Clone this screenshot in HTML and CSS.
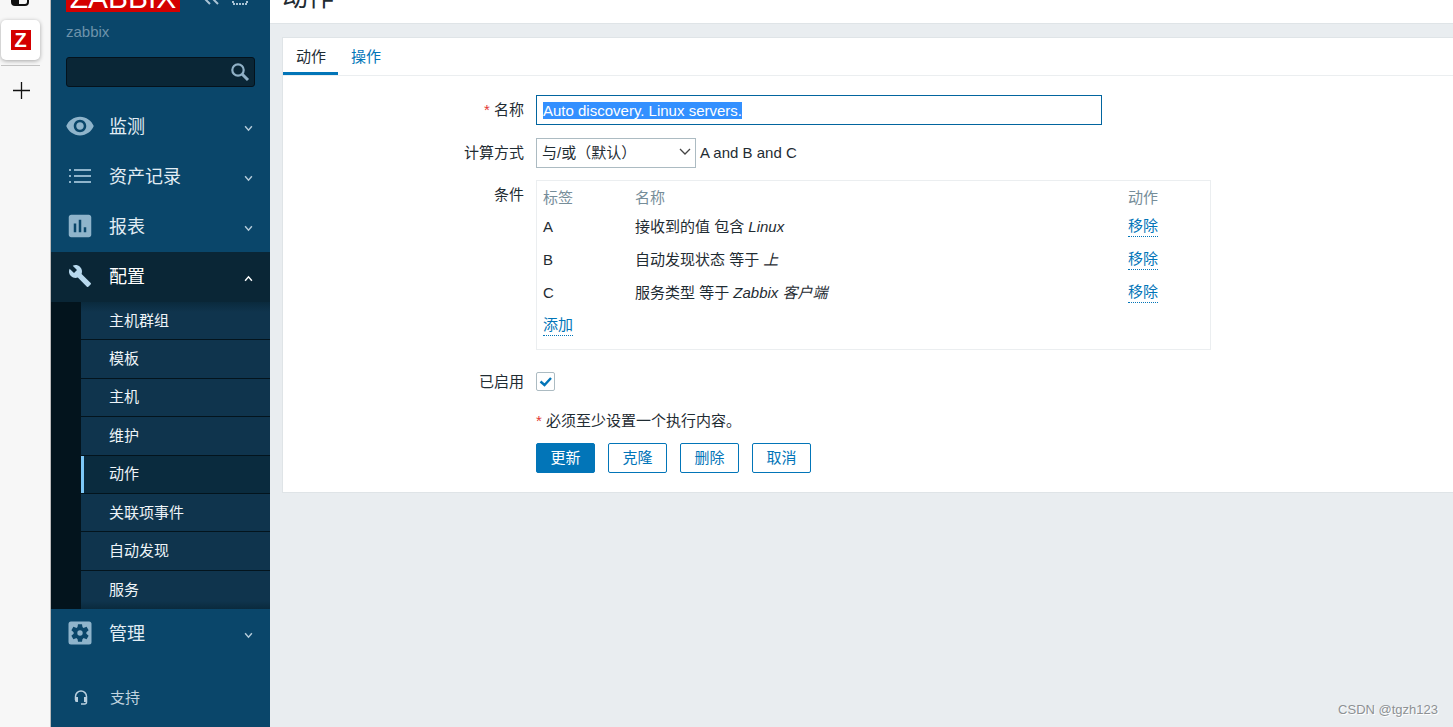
FILE: index.html
```html
<!DOCTYPE html>
<html lang="zh-CN">
<head>
<meta charset="utf-8">
<title>动作</title>
<link rel="stylesheet" href="styles.css">
</head>
<body>
<div class="rail">
  <div class="rail-top">
    <svg width="18" height="16" viewBox="0 0 18 16"><rect x="1" y="1" width="16" height="14" rx="3" fill="none" stroke="#111" stroke-width="2"/><path d="M1 3h7v12H3a2 2 0 0 1-2-2z" fill="#111"/></svg>
  </div>
  <button class="rail-tab" aria-label="Zabbix"><span class="favicon">Z</span></button>
  <button class="rail-add" aria-label="新建标签页">
    <svg width="18" height="18" viewBox="0 0 18 18"><path d="M9.500 1v17M1 9.500h17" stroke="#111" stroke-width="1.300"/></svg>
  </button>
</div>

<aside class="sidebar">
  <div class="brand">
    <a class="logo" href="#">ZABBIX</a>
    <svg class="brand-icons" width="50" height="18" viewBox="0 0 50 18"><path d="M9 4 3 10l6 6M17 4l-6 6 6 6" fill="none" stroke="#a9c3d5" stroke-width="2"/><rect x="32" y="3" width="14" height="13" fill="none" stroke="#a9c3d5" stroke-width="2" stroke-dasharray="2 1"/></svg>
  </div>
  <div class="server">zabbix</div>
  <form class="search">
    <input type="text" aria-label="搜索">
    <button type="button" aria-label="搜索"><svg width="20" height="20" viewBox="0 0 20 20"><g fill="none" stroke="#8fb0c6"><circle cx="8" cy="8" r="5.700" stroke-width="2.200"/><path d="m12 12 6 6" stroke-width="3"/></g></svg></button>
  </form>

  <nav class="menu">
    <a class="item" href="#">
      <svg class="icon" viewBox="0 0 24 24"><path d="M12 4.500C7 4.500 2.730 7.610 1 12c1.730 4.390 6 7.500 11 7.500s9.270-3.110 11-7.500c-1.730-4.390-6-7.500-11-7.500zM12 17c-2.760 0-5-2.240-5-5s2.240-5 5-5 5 2.240 5 5-2.240 5-5 5zm0-8c-1.660 0-3 1.340-3 3s1.340 3 3 3 3-1.340 3-3-1.340-3-3-3z"/></svg>
      <span>监测</span><svg class="chev" viewBox="0 0 8 6"><path d="m1 1 3 3.500L7 1"/></svg>
    </a>
    <a class="item" href="#">
      <svg class="icon" viewBox="0 0 30 30"><path d="M4 8h2v2H4zM4 14h2v2H4zM4 20h2v2H4zM9 8h17v2H9zM9 14h17v2H9zM9 20h17v2H9z"/></svg>
      <span>资产记录</span><svg class="chev" viewBox="0 0 8 6"><path d="m1 1 3 3.500L7 1"/></svg>
    </a>
    <a class="item" href="#">
      <svg class="icon" viewBox="0 0 24 24"><path d="M19 3H5c-1.100 0-2 .9-2 2v14c0 1.100.9 2 2 2h14c1.100 0 2-.9 2-2V5c0-1.100-.9-2-2-2zM9 17H7v-7h2v7zm4 0h-2V7h2v10zm4 0h-2v-4h2v4z"/></svg>
      <span>报表</span><svg class="chev" viewBox="0 0 8 6"><path d="m1 1 3 3.500L7 1"/></svg>
    </a>
    <a class="item open" href="#">
      <svg class="icon" viewBox="-3 -3 30 30"><path d="M22.700 19l-9.100-9.100c.9-2.300.4-5-1.500-6.900-2-2-5-2.400-7.400-1.300L9 6 6 9 1.600 4.700C.4 7.100.9 10.100 2.900 12.100c1.900 1.900 4.600 2.400 6.900 1.500l9.100 9.100c.4.4 1 .4 1.400 0l2.300-2.300c.5-.4.5-1.100.1-1.400z"/></svg>
      <span>配置</span><svg class="chev" viewBox="0 0 8 6"><path d="m1 5 3-3.500L7 5"/></svg>
    </a>
    <div class="submenu">
      <a href="#">主机群组</a>
      <a href="#">模板</a>
      <a href="#">主机</a>
      <a href="#">维护</a>
      <a href="#" class="current">动作</a>
      <a href="#">关联项事件</a>
      <a href="#">自动发现</a>
      <a href="#">服务</a>
    </div>
    <a class="item" href="#">
      <svg class="icon" viewBox="0 0 30 30"><rect x="3.500" y="3.500" width="23" height="23" rx="2.500"/><g fill="#0a466a"><circle cx="15" cy="15" r="6.300"/><path id="tooth" d="M13 6.200h4l.7 4h-5.400zM13 23.800h4l.7-4h-5.400z"/><use href="#tooth" transform="rotate(60 15 15)"/><use href="#tooth" transform="rotate(120 15 15)"/></g><circle cx="15" cy="15" r="2.700"/></svg>
      <span>管理</span><svg class="chev" viewBox="0 0 8 6"><path d="m1 1 3 3.500L7 1"/></svg>
    </a>
    <a class="support" href="#">
      <svg width="16" height="16" viewBox="0 0 16 16"><path d="M2.500 10V6.500a5.500 5.500 0 0 1 11 0V12q0 2-2 2H8" fill="none" stroke="#b9cfde" stroke-width="1.500"/><path d="M2 7h3v5H3.500Q2 12 2 10.500zM14 7h-3v5h1.500q1.500 0 1.500-1.500z" fill="#b9cfde"/></svg>
      <span>支持</span>
    </a>
  </nav>
</aside>

<main class="page">
  <header class="title"><h1>动作</h1></header>
  <section class="card">
    <div class="tabs"><a href="#" class="active">动作</a><a href="#">操作</a></div>
    <form class="form">
      <label for="name" class="required">名称</label>
      <div><input class="text" id="name" type="text" value="Auto discovery. Linux servers." autofocus></div>

      <label for="calc">计算方式</label>
      <div class="calc">
        <span class="select"><select id="calc"><option>与/或（默认）</option></select><svg width="12" height="8" viewBox="0 0 12 8"><path d="m1 1 5 5 5-5" fill="none" stroke="#444" stroke-width="1.300"/></svg></span>
        <span>A and B and C</span>
      </div>

      <span class="label">条件</span>
      <div class="box">
        <table>
          <thead><tr><th class="tag">标签</th><th>名称</th><th class="act">动作</th></tr></thead>
          <tbody>
            <tr><td>A</td><td>接收到的值 包含 <em>Linux</em></td><td><a class="link" href="#">移除</a></td></tr>
            <tr><td>B</td><td>自动发现状态 等于 <em>上</em></td><td><a class="link" href="#">移除</a></td></tr>
            <tr><td>C</td><td>服务类型 等于 <em>Zabbix 客户端</em></td><td><a class="link" href="#">移除</a></td></tr>
            <tr><td colspan="3"><a class="link" href="#">添加</a></td></tr>
          </tbody>
        </table>
      </div>

      <label for="enabled" class="enabled">已启用</label>
      <div class="check"><input id="enabled" type="checkbox" checked><svg width="19" height="19" viewBox="0 0 19 19"><path d="m4.500 9.500 4 3.500 6.500-7" fill="none" stroke="#0275b8" stroke-width="2.400"/></svg></div>

      <div class="foot">
        <p class="required">必须至少设置一个执行内容。</p>
        <div class="buttons">
          <button type="button" class="primary">更新</button>
          <button type="button">克隆</button>
          <button type="button">删除</button>
          <button type="button">取消</button>
        </div>
      </div>
    </form>
  </section>
  <div class="watermark">CSDN @tgzh123</div>
</main>
<script src="main.js"></script>
</body>
</html>
```
FILE: styles.css
```css
* { box-sizing: border-box; }

body {
  margin: 0;
  height: 100vh;
  display: flex;
  overflow: hidden;
  background: #e9edf0;
  color: #1f2c33;
  font: 15px/20px "Liberation Sans", "Noto Sans CJK SC", sans-serif;
}

a { color: #0275b8; text-decoration: none; }
button, input, select { font: inherit; color: inherit; }
svg { display: block; flex: none; }

/* Browser tab rail */
.rail {
  flex: none;
  width: 51px;
  padding: 0 10px 0 1px;
  background: #f7f7f7;
  border-right: 1px solid #bbb;
}
.rail-top {
  height: 6px;
  margin-bottom: 14px;
  padding-left: 10px;
  display: flex;
  align-items: flex-end;
  overflow: hidden;
}
.rail-tab {
  display: flex;
  align-items: center;
  justify-content: center;
  width: 39px;
  height: 40px;
  padding: 0;
  border: 0;
  border-radius: 5px;
  background: #fff;
  box-shadow: 0 1px 4px #0005;
}
.favicon {
  width: 20px;
  background: #d40000;
  color: #fff;
  font-size: 20px;
  font-weight: bold;
}
.rail-add {
  display: flex;
  justify-content: center;
  width: 39px;
  margin-top: 5px;
  padding: 15px 0;
  border: 0;
  border-top: 1px solid #c4c4c4;
  background: none;
}

/* Sidebar */
.sidebar {
  flex: none;
  width: 219px;
  background: #0a466a;
}
.brand {
  height: 12px;
  padding: 0 19px 0 15px;
  display: flex;
  align-items: flex-end;
  justify-content: space-between;
  overflow: hidden;
}
.logo {
  width: 114px;
  background: #d40000;
  color: #fff;
  font-size: 30px;
  line-height: 28px;
  text-align: center;
}
.brand-icons { margin-bottom: 6px; }
.server {
  margin: 10px 15px 15px;
  color: #6e93ab;
}
.search {
  display: flex;
  align-items: center;
  height: 30px;
  margin: 0 15px 15px;
  padding-right: 4px;
  border: 1px solid #04121c;
  border-radius: 3px;
  background: #0a2636;
}
.search input {
  flex: 1;
  min-width: 0;
  border: 0;
  outline: 0;
  background: none;
}
.search button { padding: 0; border: 0; background: none; }

.item {
  display: flex;
  align-items: center;
  height: 50px;
  padding: 0 17px 0 14px;
  color: #e2edf4;
  font-size: 18px;
}
.item span { flex: 1; margin-left: 14px; }
.icon { width: 30px; height: 30px; margin-bottom: 2px; fill: #8fb4cb; }
.chev {
  width: 9px;
  height: 7px;
  margin-top: 2px;
  fill: none;
  stroke: #b4cbd9;
  stroke-width: 1.300;
}
.open { background: #0a2636; color: #fff; }
.open .icon { fill: #b8d9ee; }
.open .chev { stroke: #fff; }

.submenu {
  display: grid;
  grid-auto-rows: 1fr;
  min-height: 307px;
  padding-left: 30px;
  background: #03141d;
}
.submenu a {
  display: flex;
  align-items: center;
  padding-left: 28px;
  border-bottom: 1px solid #03141d;
  background: #0f344d;
  color: #eef4f8;
}
.submenu a:first-child { background: linear-gradient(#0a2a3d, #0f344d 10px); }
.submenu a:last-child { border-bottom: 0; background: linear-gradient(0deg, #0a2a3d, #0f344d 8px); }
.submenu a.current {
  background: #0a2b3e;
  box-shadow: inset 3px 0 #7dc8f7;
}
.support {
  display: flex;
  align-items: center;
  gap: 21px;
  margin-top: 29px;
  padding-left: 22px;
  color: #c0d3df;
}

/* Page */
.page { flex: 1; min-width: 0; position: relative; }
.title {
  display: flex;
  align-items: flex-end;
  height: 24px;
  padding: 0 12px 12px;
  background: #fff;
  border-bottom: 1px solid #dfe4e7;
  overflow: hidden;
}
.title h1 { margin: 0; font-size: 26px; line-height: 28px; font-weight: 400; }
.card {
  margin: 13px 0 0 12px;
  border: 1px solid #dfe4e7;
  border-right: 0;
  background: #fff;
}
.tabs { display: flex; height: 38px; border-bottom: 1px solid #ebeef0; }
.tabs a { padding: 9px 12px 0 13px; }
.tabs .active { color: #1f2c33; border-bottom: 3px solid #0275b8; }

.form {
  display: grid;
  grid-template-columns: 241px 1fr;
  column-gap: 12px;
  padding: 19px 0;
}
.form > label, .label { justify-self: end; padding-top: 5px; }
.required::before { content: "* "; color: #e33734; }
.text {
  display: block;
  width: 566px;
  height: 30px;
  margin-bottom: 13px;
  padding: 0 6px;
  border: 1px solid #02659f;
  outline: 0;
}
.text::selection { background: #3390ff; color: #fff; }
.calc { display: flex; align-items: center; gap: 4px; margin-bottom: 12px; }
.select { position: relative; }
.select select {
  display: block;
  appearance: none;
  width: 160px;
  height: 30px;
  padding: 0 5px;
  border: 1px solid #acbbc2;
  border-radius: 0;
  background: #fff;
}
.select svg { position: absolute; right: 5px; top: 10px; pointer-events: none; }

.box {
  width: 675px;
  margin-bottom: 22px;
  padding: 5px 6px 7px;
  border: 1px solid #ebeef0;
}
.box table { width: 100%; table-layout: fixed; border-collapse: collapse; }
.box th {
  height: 24px;
  padding: 0;
  color: #768d99;
  font-weight: 400;
  text-align: left;
}
.box td { height: 33px; padding: 0; }
.tag { width: 92px; }
.act { width: 76px; }
.link { display: inline-block; border-bottom: 1px dotted #0275b8; }

.form > .enabled { padding-top: 0; }
.check { position: relative; margin-bottom: 20px; }
.check input {
  display: block;
  appearance: none;
  width: 19px;
  height: 19px;
  margin: 0;
  border: 1px solid #acbbc2;
  border-radius: 2px;
}
.check svg { position: absolute; left: 0; top: 0; pointer-events: none; }
.foot { grid-column: 2; }
.foot p { margin: 0 0 12px; }
.buttons { display: flex; gap: 13px; }
.buttons button {
  width: 59px;
  height: 30px;
  padding: 0;
  border: 1px solid #0275b8;
  border-radius: 2px;
  background: #fff;
  color: #0275b8;
}
.buttons .primary { background: #0275b8; color: #fff; }

.watermark {
  position: absolute;
  right: 15px;
  bottom: 7px;
  color: #8d9194;
  font-size: 13px;
  text-shadow: 1px 1px #fff;
}
```
FILE: main.js
```js
const nameField = document.getElementById('name');
nameField.focus();
nameField.select();
```
